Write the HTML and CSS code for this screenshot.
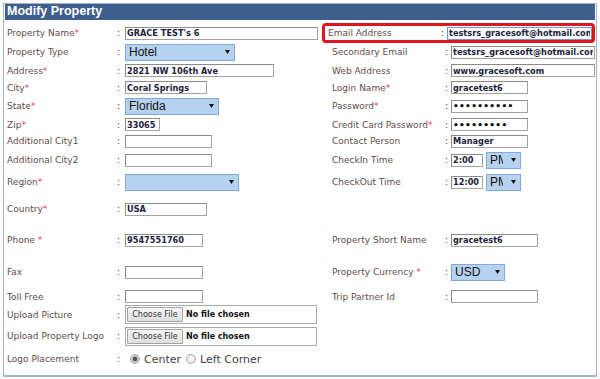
FILE: index.html
```html
<!DOCTYPE html>
<html lang="en">

<head>
    <meta charset="UTF-8">
    <meta name="viewport" content="width=device-width, initial-scale=1.0">
    <title>Modify Property</title>
    <link rel="stylesheet" href="styles.css">
</head>

<body>
    <div class="panel">
        <div class="title">Modify Property</div>
        <form class="form" autocomplete="off">
            <!-- row 1 -->
            <div class="lbl">Property Name<span class="req">*</span></div>
            <div class="sep">:</div>
            <div class="fld"><input class="txt w193" value="GRACE TEST's 6"></div>
            <div class="rlbl shift">Email Address</div>
            <div class="rsep shift">:</div>
            <div class="rfld shift"><input class="txt w145 focus" value="testsrs_gracesoft@hotmail.com"></div>
            <!-- row 2 -->
            <div class="lbl">Property Type</div>
            <div class="sep">:</div>
            <div class="fld">
                <div class="select w110"><span class="val">Hotel</span><svg viewBox="0 0 5 4"><polygon points="0,0 5,0 2.5,4" /></svg></div>
            </div>
            <div class="rlbl">Secondary Email</div>
            <div class="rsep">:</div>
            <div class="rfld"><input class="txt w144" value="testsrs_gracesoft@hotmail.com"></div>
            <!-- row 3 -->
            <div class="lbl">Address<span class="req">*</span></div>
            <div class="sep">:</div>
            <div class="fld"><input class="txt w149" value="2821 NW 106th Ave"></div>
            <div class="rlbl">Web Address</div>
            <div class="rsep">:</div>
            <div class="rfld"><input class="txt w144" value="www.gracesoft.com"></div>
            <!-- row 4 -->
            <div class="lbl">City<span class="req">*</span></div>
            <div class="sep">:</div>
            <div class="fld"><input class="txt w82" value="Coral Springs"></div>
            <div class="rlbl">Login Name<span class="req">*</span></div>
            <div class="rsep">:</div>
            <div class="rfld"><input class="txt w77" value="gracetest6"></div>
            <!-- row 5 -->
            <div class="lbl">State<span class="req">*</span></div>
            <div class="sep">:</div>
            <div class="fld">
                <div class="select w94"><span class="val">Florida</span><svg viewBox="0 0 5 4"><polygon points="0,0 5,0 2.5,4" /></svg></div>
            </div>
            <div class="rlbl">Password<span class="req">*</span></div>
            <div class="rsep">:</div>
            <div class="rfld"><input type="password" class="txt w77 pwd" value="gracetest6"></div>
            <!-- row 6 -->
            <div class="lbl">Zip<span class="req">*</span></div>
            <div class="sep">:</div>
            <div class="fld"><input class="txt w35" value="33065"></div>
            <div class="rlbl">Credit Card Password<span class="req">*</span></div>
            <div class="rsep">:</div>
            <div class="rfld"><input type="password" class="txt w77 pwd" value="gracetest"></div>
            <!-- row 7 -->
            <div class="lbl">Additional City1</div>
            <div class="sep">:</div>
            <div class="fld"><input class="txt w87" value=""></div>
            <div class="rlbl">Contact Person</div>
            <div class="rsep">:</div>
            <div class="rfld"><input class="txt w77" value="Manager"></div>
            <!-- row 8 -->
            <div class="lbl">Additional City2</div>
            <div class="sep">:</div>
            <div class="fld"><input class="txt w87" value=""></div>
            <div class="rlbl">CheckIn Time</div>
            <div class="rsep">:</div>
            <div class="rfld">
                <input class="txt w32" value="2:00">
                <div class="select w35"><span class="val">PM</span><svg viewBox="0 0 5 4"><polygon points="0,0 5,0 2.5,4" /></svg></div>
            </div>
            <!-- row 9 -->
            <div class="lbl">Region<span class="req">*</span></div>
            <div class="sep">:</div>
            <div class="fld">
                <div class="select w114"><span class="val"></span><svg viewBox="0 0 5 4"><polygon points="0,0 5,0 2.5,4" /></svg></div>
            </div>
            <div class="rlbl">CheckOut Time</div>
            <div class="rsep">:</div>
            <div class="rfld">
                <input class="txt w32" value="12:00">
                <div class="select w35"><span class="val">PM</span><svg viewBox="0 0 5 4"><polygon points="0,0 5,0 2.5,4" /></svg></div>
            </div>
            <!-- row 10 -->
            <div class="lbl">Country<span class="req">*</span></div>
            <div class="sep">:</div>
            <div class="fld"><input class="txt w82" value="USA"></div>
            <!-- row 11 -->
            <div class="lbl">Phone <span class="req">*</span></div>
            <div class="sep">:</div>
            <div class="fld"><input class="txt w78" value="9547551760"></div>
            <div class="rlbl">Property Short Name</div>
            <div class="rsep">:</div>
            <div class="rfld"><input class="txt w87" value="gracetest6"></div>
            <!-- row 12 -->
            <div class="lbl">Fax</div>
            <div class="sep">:</div>
            <div class="fld"><input class="txt w78" value=""></div>
            <div class="rlbl">Property Currency <span class="req">*</span></div>
            <div class="rsep">:</div>
            <div class="rfld">
                <div class="select w54"><span class="val">USD</span><svg viewBox="0 0 5 4"><polygon points="0,0 5,0 2.5,4" /></svg></div>
            </div>
            <!-- row 13 -->
            <div class="lbl">Toll Free</div>
            <div class="sep">:</div>
            <div class="fld"><input class="txt w78" value=""></div>
            <div class="rlbl">Trip Partner Id</div>
            <div class="rsep">:</div>
            <div class="rfld"><input class="txt w87" value=""></div>
            <!-- row 14 -->
            <div class="lbl">Upload Picture</div>
            <div class="sep">:</div>
            <div class="fld">
                <div class="file"><button type="button" class="btn">Choose File</button><span class="none">No file chosen</span></div>
            </div>
            <!-- row 15 -->
            <div class="lbl">Upload Property Logo</div>
            <div class="sep">:</div>
            <div class="fld">
                <div class="file"><button type="button" class="btn">Choose File</button><span class="none">No file chosen</span></div>
            </div>
            <!-- row 16 -->
            <div class="lbl">Logo Placement</div>
            <div class="sep">:</div>
            <div class="fld place">
                <span class="radio on"></span><span class="opt">Center</span>
                <span class="radio"></span><span class="opt">Left Corner</span>
            </div>
        </form>
        <div class="mark"></div>
    </div>
</body>

</html>
```

FILE: styles.css
```css
body {
    margin: 0;
    background: #fff;
}

.panel {
    position: relative;
    margin: 3px;
    border: 1px solid #a3b5cd;
    border-bottom-width: 2px;
}

.title {
    margin: 0 1px;
    height: 16px;
    line-height: 16px;
    padding-left: 2px;
    background: #3e5f8d;
    color: #fff;
    font: bold 12.5px "Liberation Sans", Arial, sans-serif;
}

.form {
    display: grid;
    grid-template-columns: 110px 8px 207px 113px 6px 145px;
    grid-template-rows: 20px 18px 19px 15px 22px 15px 18px 20px 24px 30px 32px 32px 17px 19px 24px 22px;
    align-items: center;
    padding: 3px 0 5px 3px;
    margin: 0;
    font: 9px "DejaVu Sans", Verdana, sans-serif;
    color: #5e4d4b;
}

.lbl {
    grid-column: 1;
    white-space: nowrap;
}

.sep {
    grid-column: 2;
    color: #333;
}

.fld {
    grid-column: 3;
    display: flex;
    align-items: center;
}

.rlbl {
    grid-column: 4;
    white-space: nowrap;
}

.rsep {
    grid-column: 5;
    color: #333;
}

.rfld {
    grid-column: 6;
    display: flex;
    align-items: center;
    gap: 3px;
}

.shift {
    margin-left: -4px;
}

.req {
    color: #e8344e;
}

/* text boxes */
.txt {
    box-sizing: border-box;
    height: 13px;
    margin: 0;
    padding: 0 1px;
    border: 1px solid #a3a3a3;
    border-top-color: #8a8a8a;
    border-left-color: #8a8a8a;
    font: bold 8.2px "DejaVu Sans", Verdana, sans-serif;
    color: #1d1d3c;
    background: #fff;
    outline: none;
}

.txt.focus {
    border-color: #6f98d0;
}

.pwd {
    font-size: 9px;
    letter-spacing: 0.3px;
    color: #000;
}

.w32 { width: 32px; }
.w35 { width: 35px; }
.w54 { width: 54px; }
.w77 { width: 77px; }
.w78 { width: 78px; }
.w82 { width: 82px; }
.w87 { width: 87px; }
.w94 { width: 94px; }
.w110 { width: 110px; }
.w114 { width: 114px; }
.w144 { width: 144px; }
.w145 { width: 145px; }
.w149 { width: 149px; }
.w193 { width: 193px; }

/* drop downs */
.select {
    box-sizing: border-box;
    display: flex;
    align-items: center;
    height: 17px;
    padding: 0 4px 0 3px;
    border: 1px solid #7ea8da;
    background: #b6d2ef;
    font: 12px "Liberation Sans", Arial, sans-serif;
    color: #111;
}

.select .val {
    flex: 1;
    min-width: 0;
    overflow: hidden;
    white-space: nowrap;
}

.select svg {
    flex: none;
    width: 5px;
    height: 4px;
    margin-left: 8px;
    fill: #111;
}

/* upload */
.file {
    box-sizing: border-box;
    display: flex;
    align-items: center;
    width: 192px;
    height: 19px;
    padding: 0 1px;
    border: 1px solid #a9a9a9;
}

.btn {
    box-sizing: border-box;
    width: 56px;
    height: 15px;
    padding: 0;
    border: 1px solid #a3a3a3;
    border-radius: 1px;
    background: linear-gradient(#f6f6f6, #dedede);
    font: 8px "DejaVu Sans", Verdana, sans-serif;
    color: #333;
}

.none {
    margin-left: 3px;
    font: bold 8px "DejaVu Sans", Verdana, sans-serif;
    color: #111;
}

/* logo placement */
.place {
    padding-left: 5px;
}

.radio {
    box-sizing: border-box;
    width: 10px;
    height: 10px;
    border-radius: 50%;
    border: 1px solid #a8a8a8;
    background: radial-gradient(circle, #fff 0, #e2e2e2 5px);
}

.radio.on {
    background: radial-gradient(circle, #555 0, #555 2px, #bdbdbd 2.6px, #ececec 5px);
}

.opt {
    margin: 0 5px 0 4px;
    font: 11px "DejaVu Sans", Verdana, sans-serif;
    color: #444;
}

/* red highlight drawn over the email row */
.mark {
    position: absolute;
    left: 318px;
    top: 19px;
    width: 273px;
    height: 20px;
    box-sizing: border-box;
    border: 3px solid #e0161f;
    border-radius: 4px;
    pointer-events: none;
}
```
